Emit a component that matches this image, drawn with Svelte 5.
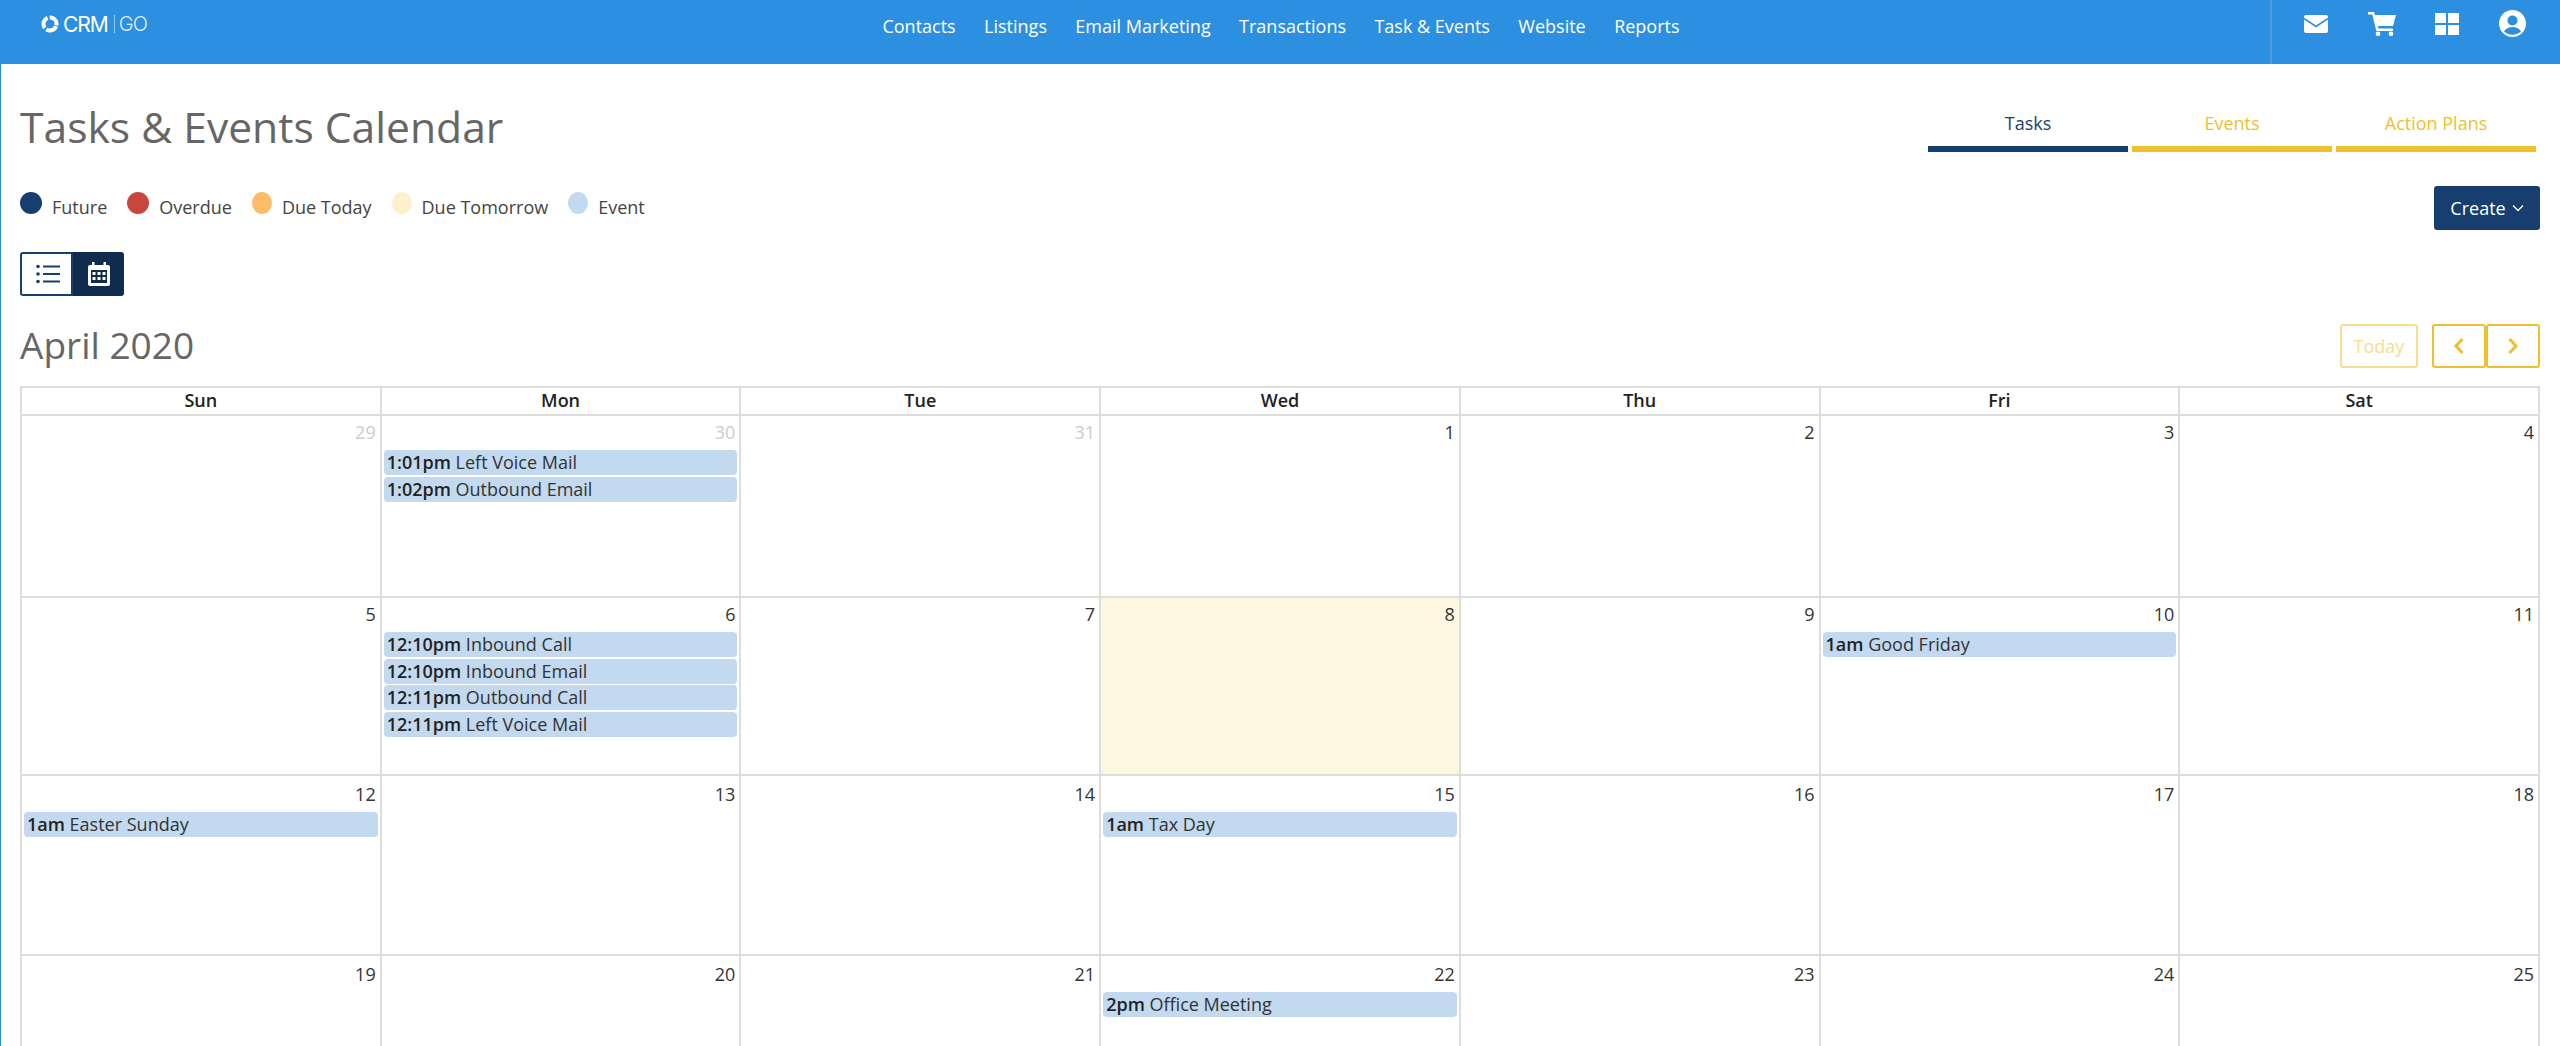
<script>
  const nav = ['Contacts', 'Listings', 'Email Marketing', 'Transactions', 'Task & Events', 'Website', 'Reports'];
  const legend = [
    { label: 'Future', color: '#163f6f', width: 22 },
    { label: 'Overdue', color: '#c8463d', width: 22 },
    { label: 'Due Today', color: '#fcbc68', width: 20 },
    { label: 'Due Tomorrow', color: '#fdf0cc', width: 20 },
    { label: 'Event', color: '#c2d9f0', width: 20 }
  ];
  const weekdays = ['Sun', 'Mon', 'Tue', 'Wed', 'Thu', 'Fri', 'Sat'];

  const events = {
    30: [['1:01pm', 'Left Voice Mail'], ['1:02pm', 'Outbound Email']],
    6: [
      ['12:10pm', 'Inbound Call'],
      ['12:10pm', 'Inbound Email'],
      ['12:11pm', 'Outbound Call'],
      ['12:11pm', 'Left Voice Mail']
    ],
    10: [['1am', 'Good Friday']],
    12: [['1am', 'Easter Sunday']],
    15: [['1am', 'Tax Day']],
    22: [['2pm', 'Office Meeting']]
  };

  const days = [
    { n: 29, muted: true }, { n: 30, muted: true }, { n: 31, muted: true },
    ...Array.from({ length: 25 }, (_, i) => ({ n: i + 1, muted: false }))
  ];
</script>

<div class="page">
  <header>
    <div class="logo">
      <svg width="18" height="18" viewBox="0 0 18 18">
        <circle cx="9" cy="9" r="6.5" fill="none" stroke="#fff" stroke-width="4" stroke-dasharray="11.6 2" transform="rotate(20 9 9)" />
      </svg>
      <span class="crm">CRM</span><span class="bar"></span><span class="go">GO</span>
    </div>
    <nav>
      {#each nav as item}
        <span>{item}</span>
      {/each}
    </nav>
    <div class="tools">
      <svg class="ico" width="24" height="18" viewBox="0 0 24 18">
        <rect width="24" height="18" rx="2" fill="#fff" />
        <path d="M0 3.5 12 11.5 24 3.5" fill="none" stroke="#2d8fdf" stroke-width="1.6" />
      </svg>
      <svg class="ico" width="28" height="24" viewBox="0 0 28 24">
        <path d="M0 0h6l1 3h21l-3 11H10l.5 2.5H25V19H8.300L4.300 2.500H0z" fill="#fff" />
        <circle cx="10" cy="21.800" r="2.300" fill="#fff" />
        <circle cx="23" cy="21.800" r="2.300" fill="#fff" />
      </svg>
      <svg class="ico" width="24" height="22" viewBox="0 0 24 22">
        <path d="M0 0h11v10H0zM13 0h11v10H13zM0 12h11v10H0zM13 12h11v10H13z" fill="#fff" />
      </svg>
      <svg class="ico" width="27" height="27" viewBox="0 0 27 27">
        <circle cx="13.500" cy="13.500" r="13.500" fill="#fff" />
        <circle cx="13.500" cy="10.500" r="5" fill="#2d8fdf" />
        <path d="M5 21.500c1.500-3 5-4.500 8.500-4.500s7 1.500 8.500 4.500c-2 2-5 3.200-8.500 3.200S7 23.500 5 21.500z" fill="#2d8fdf" />
      </svg>
    </div>
  </header>

  <main>
    <div class="top">
      <h1>Tasks &amp; Events Calendar</h1>
      <div class="tabs">
        <span class="tab active">Tasks</span>
        <span class="tab">Events</span>
        <span class="tab">Action Plans</span>
      </div>
    </div>

    <div class="legend-row">
      <div class="legend">
        {#each legend as item}
          <div class="key">
            <i style="width:{item.width}px;background:{item.color}"></i>
            <span>{item.label}</span>
          </div>
        {/each}
      </div>
      <button class="create">
        Create
        <svg width="12" height="8" viewBox="0 0 12 8"><path d="M1 1.500 6 6.500 11 1.500" fill="none" stroke="#fff" stroke-width="1.300" /></svg>
      </button>
    </div>

    <div class="toggle">
      <button class="list" aria-label="List view">
        <svg width="24" height="20" viewBox="0 0 24 20">
          <circle cx="2" cy="2.500" r="1.800" fill="#163f6f" />
          <circle cx="2" cy="10" r="1.800" fill="#163f6f" />
          <circle cx="2" cy="17.500" r="1.800" fill="#163f6f" />
          <path d="M7 2.500h17M7 10h17M7 17.500h17" stroke="#163f6f" stroke-width="2" />
        </svg>
      </button>
      <button class="cal" aria-label="Calendar view">
        <svg width="22" height="24" viewBox="0 0 22 24">
          <path d="M4 0h2.500v3h9V0H18v3h2a2 2 0 0 1 2 2v17a2 2 0 0 1-2 2H2a2 2 0 0 1-2-2V5a2 2 0 0 1 2-2h2z" fill="#fff" />
          <rect x="3" y="8" width="16" height="13" fill="#0f2b4d" />
          <path d="M4.500 10h3v3h-3zM9.500 10h3v3h-3zM14.500 10h3v3h-3zM4.500 15h3v3h-3zM9.500 15h3v3h-3zM14.500 15h3v3h-3z" fill="#fff" />
        </svg>
      </button>
    </div>

    <div class="month-row">
      <h2>April 2020</h2>
      <div class="pager">
        <button class="today">Today</button>
        <div class="arrows">
          <button aria-label="Previous">
            <svg width="12" height="18" viewBox="0 0 12 18"><path d="M9.500 2 3 9l6.500 7" fill="none" stroke="#f0c02c" stroke-width="3" /></svg>
          </button>
          <button aria-label="Next">
            <svg width="12" height="18" viewBox="0 0 12 18"><path d="M2.500 2 9 9l-6.500 7" fill="none" stroke="#f0c02c" stroke-width="3" /></svg>
          </button>
        </div>
      </div>
    </div>

    <div class="calendar">
      {#each weekdays as day}
        <div class="head">{day}</div>
      {/each}
      {#each days as day}
        <div class="cell" class:current={day.n === 8} class:muted={day.muted} class:low={!day.muted && day.n >= 12}>
          <div class="num">{day.n}</div>
          {#each events[day.n] ?? [] as ev}
            <div class="event"><b>{ev[0]}</b> {ev[1]}</div>
          {/each}
        </div>
      {/each}
    </div>
  </main>
</div>

<style>
  :global(body) {
    margin: 0;
    background: #fff;
    font-family: "Open Sans", "Liberation Sans", sans-serif;
  }

  .page {
    height: 100vh;
    overflow: hidden;
    box-sizing: border-box;
    border-left: 1px solid #2d8fdf;
  }

  header {
    display: grid;
    grid-template-columns: 1fr auto 1fr;
    height: 64px;
    margin-left: -1px;
    background: #2d8fdf;
    color: #fff;
  }

  .logo {
    display: flex;
    align-items: center;
    height: 48px;
    padding-left: 41px;
    font-family: Inter, "Liberation Sans", sans-serif;
    font-size: 21px;
    letter-spacing: -1px;
  }

  .crm {
    margin-left: 4px;
    font-weight: 400;
  }

  .bar {
    width: 1px;
    height: 18px;
    margin: 0 4px 0 6px;
    background: rgba(255, 255, 255, 0.5);
  }

  .go {
    font-size: 20px;
    font-weight: 300;
    opacity: 0.85;
  }

  nav {
    display: flex;
    gap: 28.4px;
    margin-left: 2px;
    font-size: 18px;
    line-height: 52px;
  }

  .tools {
    justify-self: end;
    display: flex;
    align-items: center;
    justify-content: space-between;
    box-sizing: border-box;
    width: 290px;
    height: 64px;
    padding: 0 34px 17px 32px;
    border-left: 2px solid rgba(255, 255, 255, 0.15);
  }

  main {
    padding: 0 20px 0 19px;
  }

  .top {
    display: flex;
    justify-content: space-between;
    height: 122px;
    padding-top: 30px;
    box-sizing: border-box;
  }

  h1 {
    margin: 0;
    font-size: 42.6px;
    line-height: 64px;
    font-weight: 400;
    color: #666;
  }

  .tabs {
    display: flex;
    gap: 4px;
    margin: 16px 4px 0 0;
    align-self: flex-start;
  }

  .tab {
    width: 200px;
    padding-bottom: 10px;
    border-bottom: 6px solid #f0c02c;
    color: #f0c02c;
    font-size: 18px;
    line-height: 26px;
    text-align: center;
  }

  .tab.active {
    border-color: #163f6f;
    color: #163f6f;
  }

  .legend-row {
    display: flex;
    justify-content: space-between;
    align-items: center;
  }

  .legend {
    display: flex;
    gap: 20px;
    align-items: center;
    padding-bottom: 2px;
    color: #444;
    font-size: 18px;
  }

  .key {
    display: flex;
    align-items: center;
    gap: 10px;
  }

  .key i {
    display: block;
    height: 22px;
    border-radius: 50%;
    margin-top: -8px;
  }

  button {
    font-family: inherit;
    cursor: pointer;
    padding: 0;
  }

  .create {
    display: flex;
    align-items: center;
    justify-content: center;
    gap: 6px;
    width: 106px;
    height: 44px;
    border: none;
    border-radius: 3px;
    background: #163f6f;
    color: #fff;
    font-size: 18px;
  }

  .toggle {
    display: flex;
    width: 104px;
    height: 44px;
    margin-top: 22px;
  }

  .toggle button {
    display: flex;
    align-items: center;
    justify-content: center;
    box-sizing: border-box;
    height: 44px;
  }

  .list {
    width: 53px;
    padding-left: 3px;
    background: #fff;
    border: 2px solid #163f6f;
    border-radius: 3px 0 0 3px;
  }

  .cal {
    width: 51px;
    background: #0f2b4d;
    border: none;
    border-radius: 0 3px 3px 0;
  }

  .month-row {
    display: flex;
    justify-content: space-between;
    align-items: center;
    height: 44px;
    margin: 28px 0 18px;
  }

  h2 {
    margin: -3px 0 0;
    font-size: 37px;
    font-weight: 400;
    color: #666;
  }

  .pager {
    display: flex;
    gap: 14px;
  }

  .arrows {
    display: flex;
  }

  .pager button {
    box-sizing: border-box;
    height: 44px;
    background: #fff;
    border: 2px solid #f0c02c;
    border-radius: 3px;
  }

  .arrows button {
    display: flex;
    align-items: center;
    justify-content: center;
    width: 54px;
  }

  .pager .today {
    width: 78px;
    border-color: #f7dd8f;
    color: #f7dd8f;
    font-size: 18px;
  }

  .calendar {
    display: grid;
    grid-template-columns: repeat(7, 1fr);
    grid-template-rows: 28px 182px 178px 180px 180px;
    border-top: 2px solid #ddd;
    border-left: 2px solid #ddd;
  }

  .head {
    border-right: 2px solid #ddd;
    border-bottom: 2px solid #ddd;
    text-align: center;
    font-size: 18px;
    font-weight: 600;
    line-height: 25px;
    color: #222;
  }

  .cell {
    box-sizing: border-box;
    padding-top: 2px;
    border-right: 2px solid #ddd;
    border-bottom: 2px solid #ddd;
  }

  .cell.low {
    padding-top: 4px;
  }

  .cell.current {
    background: #fdf7e2;
  }

  .num {
    height: 32px;
    padding-right: 4px;
    text-align: right;
    font-size: 18px;
    line-height: 28px;
    color: #333;
  }

  .muted .num {
    color: #ccc;
  }

  .event {
    height: 25px;
    margin: 0 2px 1.67px;
    padding-left: 3px;
    border-radius: 4px;
    background: #c2d9f0;
    color: #333;
    font-size: 18px;
    line-height: 25px;
    white-space: nowrap;
    overflow: hidden;
  }

  .event b {
    font-weight: 600;
    color: #222;
  }
</style>
